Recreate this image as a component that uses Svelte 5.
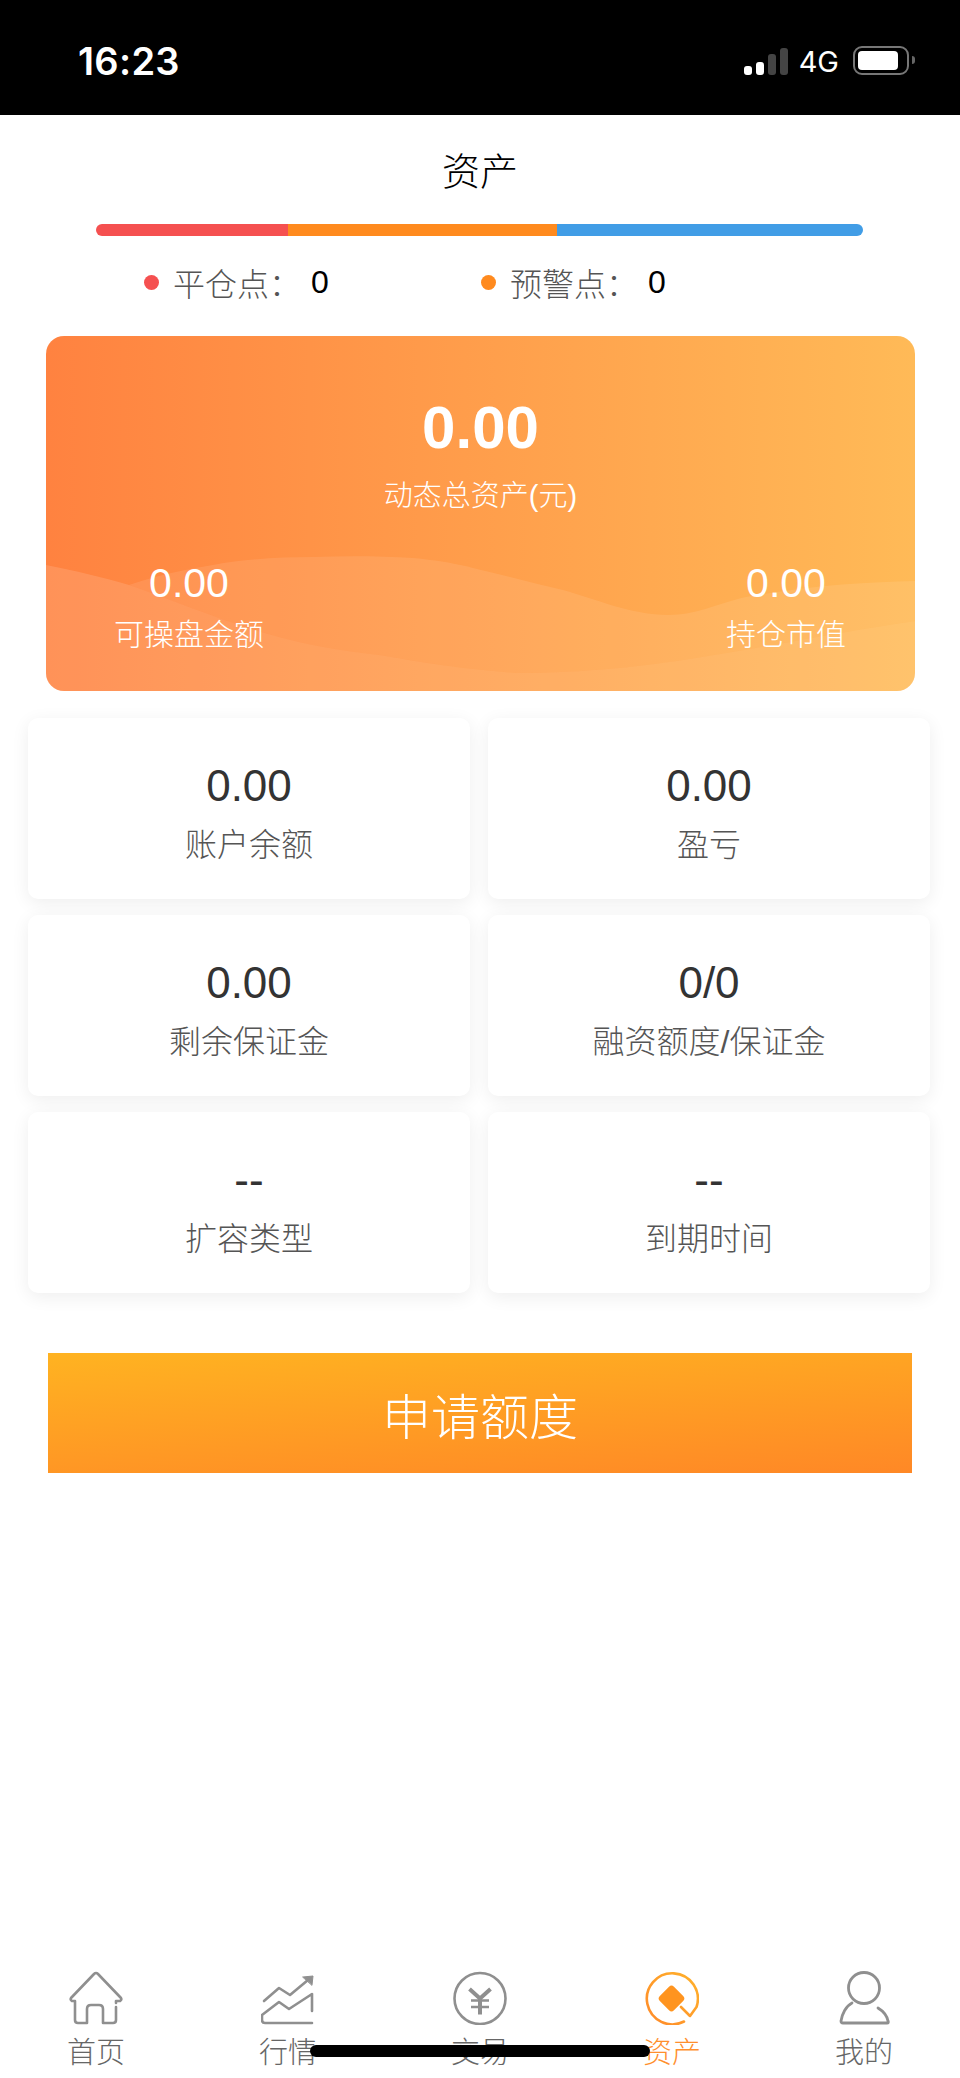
<script>
  const stats = [
    { value: '0.00', label: '账户余额' },
    { value: '0.00', label: '盈亏' },
    { value: '0.00', label: '剩余保证金' },
    { value: '0/0', label: '融资额度/保证金' },
    { value: '--', label: '扩容类型' },
    { value: '--', label: '到期时间' }
  ];
</script>

<div class="page">
  <header class="status">
    <span class="time">16:23</span>
    <div class="status-right">
      <div class="signal">
        <i class="b1"></i><i class="b2"></i><i class="b3 dim"></i><i class="b4 dim"></i>
      </div>
      <span class="net">4G</span>
      <div class="battery"><div class="cell"></div></div>
      <div class="nub"></div>
    </div>
  </header>

  <h1 class="title">资产</h1>

  <div class="risk-bar"><i class="red"></i><i class="orange"></i><i class="blue"></i></div>

  <div class="legend">
    <div class="legend-item"><i class="dot red"></i><span class="k">平仓点：</span><span class="v">0</span></div>
    <div class="legend-item"><i class="dot orange"></i><span class="k">预警点：</span><span class="v">0</span></div>
  </div>

  <section class="hero">
    <svg class="waves" viewBox="0 0 869 355" preserveAspectRatio="none" aria-hidden="true">
      <path d="M0 229 C30 235 55 241 83 249 C130 265 180 287 233 301 C270 311 300 315 333 319 C370 325 405 332 470 337 C540 337 600 330 650 322 C720 311 800 295 869 285 V355 H0 Z" fill="#fff" fill-opacity="0.13" />
      <path d="M83 249 C110 240 135 234 167 229 C200 223 235 221 267 221 C300 220 335 220 367 222 C400 225 420 230 435 234 C465 241 490 248 517 254 C550 263 585 279 622 279 C650 279 670 268 700 261 C760 250 820 246 869 245 V285 C800 295 720 311 650 322 C600 330 540 337 470 337 C405 332 370 325 333 319 C300 315 270 311 233 301 C180 287 130 265 83 249 Z" fill="#fff" fill-opacity="0.09" />
    </svg>
    <div class="hero-main">
      <div class="hero-value">0.00</div>
      <div class="hero-label">动态总资产(元)</div>
    </div>
    <div class="hero-sub">
      <div class="sub-item"><div class="sub-value">0.00</div><div class="sub-label">可操盘金额</div></div>
      <div class="sub-item"><div class="sub-value">0.00</div><div class="sub-label">持仓市值</div></div>
    </div>
  </section>

  <section class="grid">
    {#each stats as s}
      <div class="card">
        <div class="card-value">{s.value}</div>
        <div class="card-label">{s.label}</div>
      </div>
    {/each}
  </section>

  <button class="apply">申请额度</button>

  <nav class="tabs">
    <div class="tab">
      <svg viewBox="69 1971 54 54" width="54" height="54" fill="none" stroke="#8f8f8f" stroke-width="2.6" stroke-linecap="round" stroke-linejoin="round">
        <path d="M116 2007 V2020 Q116 2023 113 2023 H103 V2009 Q103 2005 99 2005 H91 Q87 2005 87 2009 V2023 H78 Q75 2023 75 2020 V2001 H72 Q70 2000 71 1998 L94 1974 Q96 1972 98 1974 L121 1998 Q122 2000 120 2001 H116 V2003" />
      </svg>
      <span>首页</span>
    </div>
    <div class="tab">
      <svg viewBox="261 1971 54 54" width="54" height="54" fill="none" stroke="#8f8f8f" stroke-width="2.6" stroke-linecap="round" stroke-linejoin="round">
        <path d="M264 2001 L279 1988 L290 1995 L308 1980" />
        <path d="M303 1977 L313 1976 L312 1985 Z" fill="#8f8f8f" stroke-width="1" />
        <path d="M312 2023 H265 Q262 2023 262 2020 V2015 L279 2002 L289 2009 L312 1994 V2011" />
      </svg>
      <span>行情</span>
    </div>
    <div class="tab">
      <svg viewBox="453 1971 54 54" width="54" height="54" fill="none" stroke="#8f8f8f" stroke-width="2.6" stroke-linecap="round" stroke-linejoin="round">
        <circle cx="480" cy="1998.5" r="25.5" />
        <path d="M469.5 1989 L480 1998.5 L490.5 1989" stroke-width="4" stroke-linecap="butt" />
        <path d="M471 2000.5 H489 M471 2007 H489" stroke-width="2.6" stroke-linecap="butt" />
        <path d="M480 1998.5 V2014.5" stroke-width="4" stroke-linecap="butt" />
      </svg>
      <span>交易</span>
    </div>
    <div class="tab active">
      <svg viewBox="645 1971 54 54" width="54" height="54" fill="none" stroke-width="2.6" stroke-linecap="round" stroke-linejoin="round">
        <defs>
          <linearGradient id="assetGrad" x1="0" y1="1" x2="1" y2="0">
            <stop offset="0" stop-color="#ff8a2a" />
            <stop offset="1" stop-color="#ffb12a" />
          </linearGradient>
        </defs>
        <path d="M684 2021.5 A25.5 25.5 0 1 1 696.5 2007 L690 2016 L681 2007" stroke="url(#assetGrad)" />
        <rect x="661.5" y="1988.5" width="20" height="20" rx="3.5" transform="rotate(45 671.5 1998.5)" fill="#ff941f" />
      </svg>
      <span>资产</span>
    </div>
    <div class="tab">
      <svg viewBox="837 1971 54 54" width="54" height="54" fill="none" stroke="#8f8f8f" stroke-width="2.8" stroke-linecap="round" stroke-linejoin="round">
        <circle cx="864" cy="1988" r="15.5" />
        <path d="M852 2003 C846 2006 842 2014 841 2021 Q841 2023 843 2023 H887 Q889 2023 888 2021 C887 2016 883 2011 878 2008" />
      </svg>
      <span>我的</span>
    </div>
  </nav>

  <div class="home-indicator"></div>
</div>

<style>
  :global(body) {
    margin: 0;
    background: #fff;
  }
  .page {
    position: relative;
    width: 960px;
    height: 2078px;
    overflow: hidden;
    background: #fff;
    font-family: "Liberation Sans", "Noto Sans CJK SC", sans-serif;
    display: flex;
    flex-direction: column;
  }
  i { display: block; }

  .status {
    height: 115px;
    flex: none;
    background: #000;
    display: flex;
    justify-content: space-between;
    color: #fff;
    padding: 0 45px 0 78px;
    box-sizing: border-box;
  }
  .time {
    font-family: Inter, "Liberation Sans", sans-serif;
    font-weight: 600;
    font-size: 38px;
    letter-spacing: 0.3px;
    line-height: 40px;
    margin-top: 41px;
  }
  .status-right {
    display: flex;
    align-items: flex-start;
    margin-top: 46px;
  }
  .signal {
    display: flex;
    align-items: flex-end;
    gap: 4px;
    height: 28px;
    margin-top: 1px;
  }
  .signal i {
    width: 8px;
    border-radius: 3px;
    background: #fff;
  }
  .signal .dim { background: #444; }
  .b1 { height: 9px; }
  .b2 { height: 13px; }
  .b3 { height: 21px; }
  .b4 { height: 27px; }
  .net {
    font-family: Inter, "Liberation Sans", sans-serif;
    font-size: 29px;
    line-height: 28px;
    margin: 2px 14px 0 11px;
  }
  .battery {
    width: 56px;
    height: 29px;
    box-sizing: border-box;
    border: 2.5px solid #777;
    border-radius: 9px;
    padding: 2.5px;
  }
  .cell {
    width: 40px;
    height: 19px;
    background: #fff;
    border-radius: 4px;
  }
  .nub {
    width: 3px;
    height: 8px;
    margin: 10px 0 0 3px;
    background: #666;
    border-radius: 0 4px 4px 0;
  }

  .title {
    margin: 35px 0 0;
    text-align: center;
    font-size: 38px;
    font-weight: 300;
    line-height: 44px;
    color: #000;
  }

  .risk-bar {
    margin: 30px 97px 0 96px;
    height: 12px;
    border-radius: 6px;
    overflow: hidden;
    display: flex;
    flex: none;
  }
  .risk-bar .red { width: 192px; background: #f55050; }
  .risk-bar .orange { width: 269px; background: #ff8a1e; }
  .risk-bar .blue { flex: 1; background: #419de6; }

  .legend {
    display: flex;
    height: 44px;
    margin: 24px 0 0 144px;
    flex: none;
  }
  .legend-item {
    width: 337px;
    display: flex;
    align-items: center;
    font-size: 32px;
  }
  .dot {
    width: 15px;
    height: 15px;
    border-radius: 50%;
    margin-right: 14px;
  }
  .dot.red { background: #f55050; }
  .dot.orange { background: #ff8a1e; }
  .k { color: #555; width: 138px; font-weight: 300; }
  .v { color: #000; }

  .hero {
    position: relative;
    margin: 32px 45px 0 46px;
    height: 355px;
    flex: none;
    border-radius: 18px;
    overflow: hidden;
    color: #fff;
    background: linear-gradient(90deg, #ff8240, #ffba57);
  }
  .waves {
    position: absolute;
    inset: 0;
    width: 100%;
    height: 100%;
  }
  .hero-main {
    position: relative;
    text-align: center;
    padding-top: 58px;
  }
  .hero-value {
    font-size: 60px;
    font-weight: 700;
    line-height: 68px;
  }
  .hero-label {
    font-size: 29px;
    font-weight: 300;
    line-height: 40px;
    margin-top: 14px;
  }
  .hero-sub {
    position: relative;
    display: flex;
    justify-content: space-between;
    margin-top: 45px;
    padding: 0 69px 0 68px;
  }
  .sub-item { text-align: center; }
  .sub-value { font-size: 41px; line-height: 44px; }
  .sub-label { font-size: 30px; font-weight: 300; line-height: 40px; margin-top: 10px; }

  .grid {
    margin: 27px 30px 0 28px;
    display: grid;
    grid-template-columns: 1fr 1fr;
    gap: 16px 18px;
    flex: none;
  }
  .card {
    height: 181px;
    box-sizing: border-box;
    padding-top: 43px;
    border-radius: 10px;
    background: #fff;
    text-align: center;
    box-shadow: 0 4px 18px rgba(0, 0, 0, 0.07);
  }
  .card-value {
    font-size: 44px;
    line-height: 50px;
    color: #333;
  }
  .card-label {
    font-size: 32px;
    font-weight: 300;
    line-height: 42px;
    color: #555;
    margin-top: 13px;
  }

  .apply {
    margin: 60px 48px 0;
    width: 864px;
    height: 120px;
    flex: none;
    border: 0;
    padding: 0;
    font-family: inherit;
    font-size: 49px;
    font-weight: 300;
    color: #fff;
    background: linear-gradient(176deg, #ffb321, #ff8826);
  }

  .tabs {
    position: absolute;
    left: 0;
    right: 0;
    bottom: 0;
    height: 115px;
    display: grid;
    grid-template-columns: repeat(5, 1fr);
  }
  .tab {
    display: flex;
    flex-direction: column;
    align-items: center;
    padding-top: 8px;
    color: #666;
    font-size: 29px;
    font-weight: 300;
    line-height: 36px;
  }
  .tab svg { display: block; margin-bottom: 10px; }
  .tab.active { color: #ff8f2e; }

  .home-indicator {
    position: absolute;
    left: 310px;
    width: 340px;
    top: 2045px;
    height: 12px;
    border-radius: 6px;
    background: #000;
  }
</style>
